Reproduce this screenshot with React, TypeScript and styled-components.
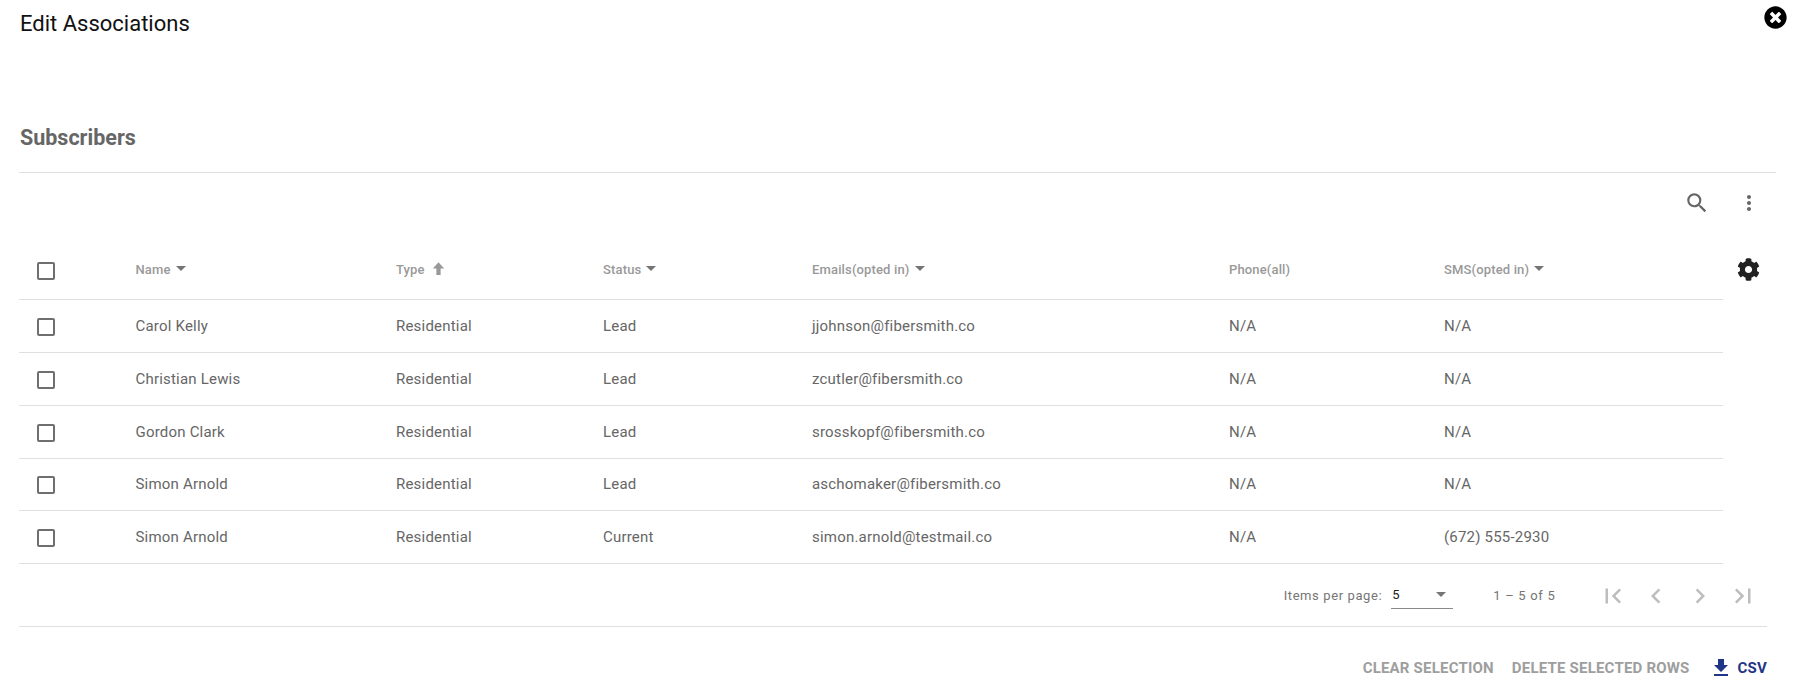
import React from "react";
import styled, { createGlobalStyle } from "styled-components";
import { FaCog, FaTimesCircle } from "react-icons/fa";
import {
  MdChevronLeft,
  MdChevronRight,
  MdFileDownload,
  MdFirstPage,
  MdLastPage,
  MdMoreVert,
  MdSearch,
} from "react-icons/md";

const GlobalStyle = createGlobalStyle`
  body {
    margin: 0;
    background: #fff;
    font-family: Roboto, "Liberation Sans", sans-serif;
  }
`;

const Page = styled.div`
  width: 1793px;
  height: 695px;
  box-sizing: border-box;
  padding: 0 17px 0 19px;
  overflow: hidden;
`;
const Header = styled.div`
  display: flex;
  justify-content: space-between;
  height: 46px;
  padding: 11px 0 0 1px;
  box-sizing: border-box;
`;
const Title = styled.h1`
  margin: 0;
  font-size: 22px;
  line-height: 25px;
  font-weight: 400;
  color: #111;
`;
const CloseButton = styled.div`
  display: flex;
  margin: -5px -11px 0 0;
  font-size: 23px;
  color: #000;
`;
const SectionTitle = styled.h2`
  margin: 80px 0 0;
  padding: 0 0 22px 1px;
  font-size: 21.5px;
  line-height: 24px;
  font-weight: 700;
  color: #666;
  border-bottom: 1px solid #e0e0e0;
`;
const Toolbar = styled.div`
  display: flex;
  justify-content: flex-end;
  align-items: center;
  gap: 27px;
  height: 60px;
  padding-right: 15px;
  color: #666;
  font-size: 26px;
  svg {
    display: block;
  }
  svg:last-child {
    font-size: 24px;
  }
`;
const TableRow = styled.div`
  display: flex;
  align-items: flex-start;
`;
const Table = styled.div`
  width: 1704px;
`;
const Row = styled.div<{ $head?: boolean }>`
  display: grid;
  grid-template-columns: 116.5px 260.5px 207px 209px 417px 215px 1fr;
  align-items: center;
  height: ${({ $head }) => ($head ? "67.2px" : "52.8px")};
  padding-top: ${({ $head }) => ($head ? "8px" : "0")};
  box-sizing: border-box;
  border-bottom: 1px solid #e0e0e0;
`;
const CheckCell = styled.div`
  padding: 2px 0 0 18px;
  display: flex;
`;
const Checkbox = styled.span`
  width: 18px;
  height: 18px;
  box-sizing: border-box;
  border: 2px solid #6f6f6f;
  border-radius: 2px;
`;
const HeadCell = styled.div`
  display: flex;
  align-items: center;
  font-size: 13px;
  font-weight: 500;
  letter-spacing: 0.15px;
  color: #999;
  line-height: 16px;
`;
const Caret = styled.span`
  width: 0;
  height: 0;
  margin: 0 0 3px 5px;
  border-left: 5px solid transparent;
  border-right: 5px solid transparent;
  border-top: 5px solid #757575;
`;
const SortArrow = styled.svg`
  width: 17px;
  height: 17px;
  margin: -4px 0 0 5px;
  fill: #999;
`;
const Cell = styled.div`
  font-size: 15px;
  letter-spacing: 0.2px;
  color: #666;
`;
const GearButton = styled.div`
  display: flex;
  margin: 25px 0 0 14px;
  font-size: 23px;
  color: #212121;
`;
const Paginator = styled.div`
  display: flex;
  align-items: center;
  justify-content: flex-end;
  height: 62px;
  padding: 1px 18px 0 0;
  box-sizing: border-box;
  font-size: 13px;
  letter-spacing: 0.6px;
  color: #757575;
`;
const PageSelect = styled.div`
  display: flex;
  align-items: center;
  justify-content: space-between;
  box-sizing: border-box;
  width: 62px;
  height: 24px;
  margin: 3px 0 0 9px;
  padding: 0 7px 4px 1px;
  color: #212121;
  letter-spacing: 0;
  border-bottom: 1px solid #8a8a8a;
`;
const SelectCaret = styled.span`
  width: 0;
  height: 0;
  border-left: 5px solid transparent;
  border-right: 5px solid transparent;
  border-top: 5px solid #757575;
`;
const RangeLabel = styled.div`
  margin: 0 42px 0 40px;
  letter-spacing: 0.7px;
`;
const PagerButtons = styled.div`
  display: flex;
  gap: 13.5px;
  font-size: 30px;
  color: #bdbdbd;
  svg {
    display: block;
  }
`;
const Footer = styled.div`
  display: flex;
  justify-content: flex-end;
  align-items: center;
  gap: 18px;
  height: 82px;
  margin-right: 9px;
  border-top: 1px solid #e0e0e0;
`;
const FooterAction = styled.div`
  font-size: 15px;
  font-weight: 700;
  color: #9e9e9e;
  letter-spacing: 0.2px;
`;
const CsvButton = styled.div`
  display: flex;
  align-items: center;
  gap: 5px;
  font-size: 15px;
  font-weight: 700;
  letter-spacing: 0.2px;
  color: #1f3585;
  margin-left: 1px;
  svg {
    font-size: 24px;
  }
`;

const rows = [
  ["Carol Kelly", "Residential", "Lead", "jjohnson@fibersmith.co", "N/A", "N/A"],
  ["Christian Lewis", "Residential", "Lead", "zcutler@fibersmith.co", "N/A", "N/A"],
  ["Gordon Clark", "Residential", "Lead", "srosskopf@fibersmith.co", "N/A", "N/A"],
  ["Simon Arnold", "Residential", "Lead", "aschomaker@fibersmith.co", "N/A", "N/A"],
  ["Simon Arnold", "Residential", "Current", "simon.arnold@testmail.co", "N/A", "(672) 555-2930"],
];

const App: React.FC = () => {
  return (
    <Page>
      <GlobalStyle />
      <Header>
        <Title>Edit Associations</Title>
        <CloseButton>
          <FaTimesCircle />
        </CloseButton>
      </Header>
      <SectionTitle>Subscribers</SectionTitle>
      <Toolbar>
        <MdSearch />
        <MdMoreVert />
      </Toolbar>
      <TableRow>
        <Table>
          <Row $head>
            <CheckCell>
              <Checkbox />
            </CheckCell>
            <HeadCell>
              Name
              <Caret />
            </HeadCell>
            <HeadCell>
              Type
              <SortArrow viewBox="0 0 24 24">
                <path d="M12 3 4 12h5v9h6v-9h5z" />
              </SortArrow>
            </HeadCell>
            <HeadCell>
              Status
              <Caret />
            </HeadCell>
            <HeadCell>
              Emails(opted in)
              <Caret />
            </HeadCell>
            <HeadCell>Phone(all)</HeadCell>
            <HeadCell>
              SMS(opted in)
              <Caret />
            </HeadCell>
          </Row>
          {rows.map((row, i) => (
            <Row key={i}>
              <CheckCell>
                <Checkbox />
              </CheckCell>
              {row.map((value, j) => (
                <Cell key={j}>{value}</Cell>
              ))}
            </Row>
          ))}
        </Table>
        <GearButton>
          <FaCog />
        </GearButton>
      </TableRow>
      <Paginator>
        Items per page:
        <PageSelect>
          5
          <SelectCaret />
        </PageSelect>
        <RangeLabel>1 – 5 of 5</RangeLabel>
        <PagerButtons>
          <MdFirstPage />
          <MdChevronLeft />
          <MdChevronRight />
          <MdLastPage />
        </PagerButtons>
      </Paginator>
      <Footer>
        <FooterAction>CLEAR SELECTION</FooterAction>
        <FooterAction>DELETE SELECTED ROWS</FooterAction>
        <CsvButton>
          <MdFileDownload />
          CSV
        </CsvButton>
      </Footer>
    </Page>
  );
};

export default App;
